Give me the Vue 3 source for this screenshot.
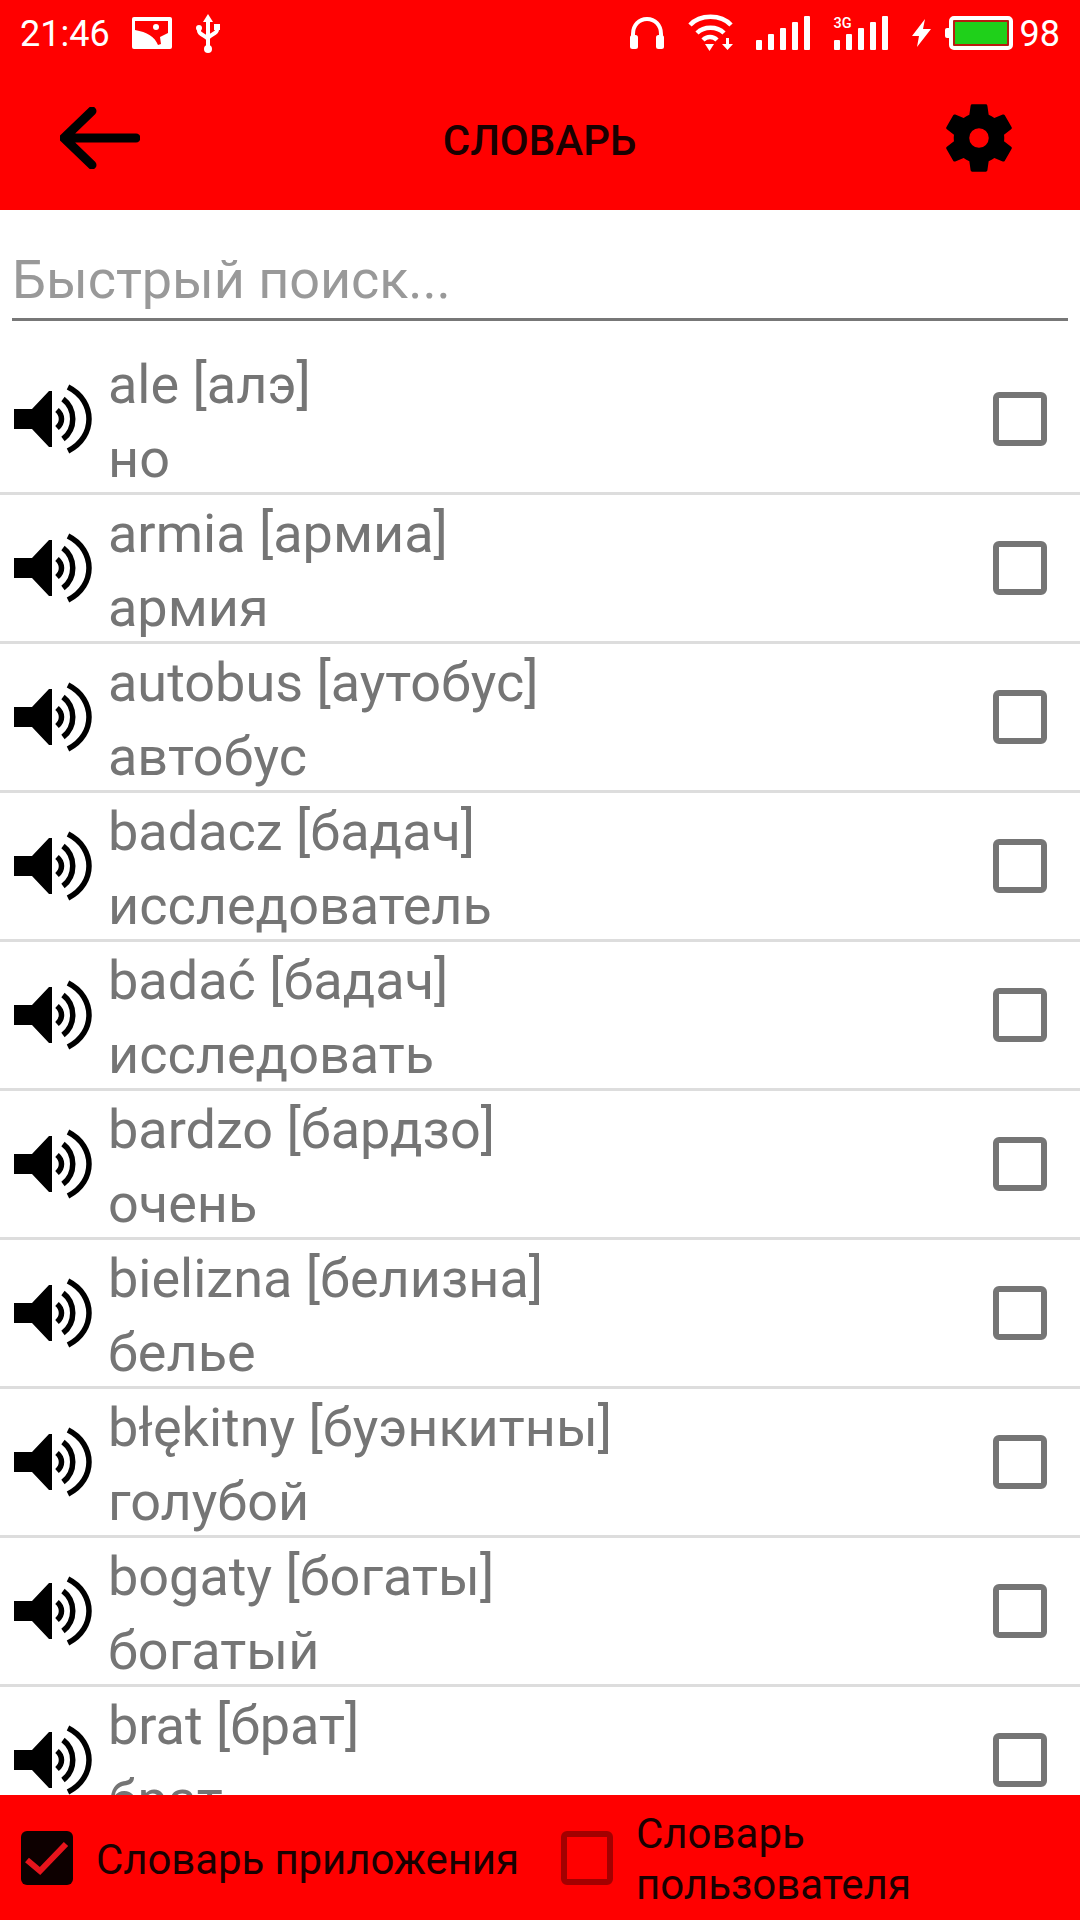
<script setup>
import { ref } from 'vue'

const words = ref([
	{ pl: 'ale [алэ]', ru: 'но' },
	{ pl: 'armia [армиа]', ru: 'армия' },
	{ pl: 'autobus [аутобус]', ru: 'автобус' },
	{ pl: 'badacz [бадач]', ru: 'исследователь' },
	{ pl: 'badać [бадач]', ru: 'исследовать' },
	{ pl: 'bardzo [бардзо]', ru: 'очень' },
	{ pl: 'bielizna [белизна]', ru: 'белье' },
	{ pl: 'błękitny [буэнкитны]', ru: 'голубой' },
	{ pl: 'bogaty [богаты]', ru: 'богатый' },
	{ pl: 'brat [брат]', ru: 'брат' }
]);
</script>

<template>
	<div class="page">
		<div class="status">
			<span class="time">21:46</span>
			<svg class="ic-photo" width="40" height="32" viewBox="0 0 40 32">
				<rect width="40" height="32" rx="2" fill="#fff" />
				<path fill="#f00" d="M3 4h33v12l-8 4 1 7-3 1C23 20 15 15 3 13z" />
				<circle cx="24" cy="10" r="3" fill="#fff" />
			</svg>
			<svg class="ic-usb" width="24" height="39" viewBox="0 0 24 39">
				<path fill="none" stroke="#fff" stroke-width="4" d="M12 5v29M3 15v2c0 4 9 5 9 9M21 15v1c0 4-9 5-9 9" />
				<path fill="#fff" d="M12 0l5 8H7z" />
				<circle cx="3" cy="14" r="3" fill="#fff" />
				<path fill="#fff" d="M18 10h6v6h-6z" />
				<circle cx="12" cy="35" r="4" fill="#fff" />
			</svg>
			<span class="grow"></span>
			<svg class="ic-phones" width="34" height="32" viewBox="0 0 34 32">
				<path fill="none" stroke="#fff" stroke-width="4" d="M3 22V17C3 8 9 2 17 2s14 6 14 15v5" />
				<rect x="0" y="18" width="8" height="14" rx="2.5" fill="#fff" />
				<rect x="26" y="18" width="8" height="14" rx="2.5" fill="#fff" />
			</svg>
			<svg class="ic-wifi" width="46" height="38" viewBox="0 0 46 38">
				<path fill="none" stroke="#fff" stroke-width="4.500" d="M2 11C12 0 33 0 43 11M9 19c7-7 20-7 27 0M15 26c4-4 10-4 14 0" />
				<path fill="#fff" d="M17 30h9l-4.500 7z" />
				<path fill="#fff" d="M38 24h3v6h4l-5.500 6-5.500-6h4z" />
			</svg>
			<svg class="ic-signal" width="54" height="34" viewBox="0 0 54 34">
				<rect x="0" y="24" width="6" height="10" rx="1" fill="#fff" />
				<rect x="12" y="18" width="6" height="16" rx="1" fill="#fff" />
				<rect x="24" y="12" width="6" height="22" rx="1" fill="#fff" />
				<rect x="36" y="6" width="6" height="28" rx="1" fill="#fff" />
				<rect x="48" y="0" width="6" height="34" rx="1" fill="#fff" />
			</svg>
			<div class="sig-3g">
				<span class="tag-3g">3G</span>
				<svg width="54" height="34" viewBox="0 0 54 34">
					<rect x="0" y="24" width="6" height="10" rx="1" fill="#fff" />
					<rect x="12" y="18" width="6" height="16" rx="1" fill="#fff" />
					<rect x="24" y="12" width="6" height="22" rx="1" fill="#fff" />
					<rect x="36" y="6" width="6" height="28" rx="1" fill="#fff" />
					<rect x="48" y="0" width="6" height="34" rx="1" fill="#fff" />
				</svg>
			</div>
			<svg class="ic-bolt" width="19" height="28" viewBox="0 0 19 28">
				<path fill="#fff" d="M13 0L0 17h7L5 28 19 10h-8z" />
			</svg>
			<div class="battery">
				<span class="batt-nub"></span>
				<span class="batt-body"><span class="batt-fill"></span></span>
			</div>
			<span class="level">98</span>
		</div>

		<div class="toolbar">
			<svg class="back" width="80" height="62" viewBox="0 0 80 62">
				<path fill="none" stroke="#000" stroke-width="9" stroke-linecap="round" d="M4 31h72M32 4L4 31l28 27" />
			</svg>
			<div class="title">СЛОВАРЬ</div>
			<svg class="gear" width="66" height="70" viewBox="2.200 2 19.600 20">
				<path fill="#000" d="M19.430 12.980c.04-.32.070-.64.070-.98s-.03-.66-.07-.98l2.110-1.650a.5.500 0 0 0 .12-.64l-2-3.460a.5.500 0 0 0-.61-.22l-2.490 1a7.300 7.300 0 0 0-1.690-.98l-.38-2.650A.49.490 0 0 0 14 2h-4a.49.490 0 0 0-.49.420l-.38 2.650c-.61.250-1.170.590-1.690.98l-2.490-1a.49.490 0 0 0-.61.220l-2 3.460a.49.490 0 0 0 .12.640l2.110 1.650c-.04.320-.07.650-.07.980s.03.660.07.980l-2.110 1.650a.5.500 0 0 0-.12.640l2 3.460c.12.220.39.300.61.220l2.490-1c.52.400 1.080.730 1.690.98l.38 2.650c.03.240.24.420.49.420h4c.25 0 .46-.18.49-.42l.38-2.650c.61-.25 1.170-.59 1.690-.98l2.490 1c.23.090.49 0 .61-.22l2-3.460a.5.500 0 0 0-.12-.64zM12 14.900a2.900 2.900 0 1 1 0-5.800 2.900 2.900 0 0 1 0 5.800z" />
			</svg>
		</div>

		<div class="search">
			<input class="search-input" type="text" placeholder="Быстрый поиск..." />
		</div>

		<ul class="list">
			<li v-for="word in words" :key="word.pl" class="row">
				<svg class="speaker" width="80" height="70" viewBox="0 0 80 70">
					<path fill="#000" d="M0 25h18L35 7h3v56h-3L18 45H0z" />
					<path fill="none" stroke="#000" stroke-width="5.500" d="M43 26c6 5 6 13 0 18M49 15c13 10 13 30 0 40M54 3c28 14 28 50 0 64" />
				</svg>
				<div class="text">
					<p>{{ word.pl }}</p>
					<p>{{ word.ru }}</p>
				</div>
				<span class="box"></span>
			</li>
		</ul>

		<div class="bottom">
			<div class="opt first">
				<span class="check on">
					<svg width="52" height="54" viewBox="0 0 52 54">
						<path fill="none" stroke="#e8141c" stroke-width="6" d="M6 29l13 11L45 13" />
					</svg>
				</span>
				<span class="label">Словарь приложения</span>
			</div>
			<div class="opt">
				<span class="check"></span>
				<span class="label">Словарь<br />пользователя</span>
			</div>
		</div>
	</div>
</template>

<style>
html, body {
	margin: 0;
	background: #fff;
}
</style>

<style scoped>
.page {
	width: 1080px;
	height: 1920px;
	display: flex;
	flex-direction: column;
	overflow: hidden;
	font-family: Roboto, "Noto Sans", sans-serif;
	background: #fff;
}

.status {
	height: 66px;
	flex: none;
	display: flex;
	align-items: center;
	padding: 0 20px;
	box-sizing: border-box;
	background: #ff0000;
	color: #fff;
}

.time {
	font-size: 36px;
	width: 112px;
	padding-top: 2px;
}

.ic-usb {
	margin-left: 24px;
}

.grow {
	flex: 1;
}

.ic-wifi {
	margin-left: 24px;
}

.ic-signal {
	margin-left: 22px;
}

.sig-3g {
	position: relative;
	margin-left: 24px;
	height: 34px;
}

.sig-3g svg {
	display: block;
}

.tag-3g {
	position: absolute;
	left: 0;
	top: 1px;
	font-size: 14.500px;
	font-weight: 500;
	line-height: 13px;
}

.ic-bolt {
	margin-left: 24px;
}

.battery {
	margin-left: 14px;
	display: flex;
	align-items: center;
}

.batt-nub {
	width: 4px;
	height: 10px;
	background: #fff;
	border-radius: 2px 0 0 2px;
}

.batt-body {
	width: 64px;
	height: 34px;
	box-sizing: border-box;
	border: 4px solid #fff;
	border-radius: 5px;
	padding: 2px;
	background: #b81c10;
	display: block;
}

.batt-fill {
	display: block;
	height: 100%;
	background: #1fd01a;
}

.level {
	font-size: 36px;
	margin-left: 7px;
	padding-top: 2px;
}

.toolbar {
	height: 144px;
	flex: none;
	display: flex;
	align-items: center;
	justify-content: space-between;
	padding: 0 68px 0 60px;
	background: #ff0000;
}

.title {
	font-size: 42px;
	font-weight: 500;
	color: #1a0000;
	margin-top: 4px;
	margin-right: 7px;
}

.search {
	flex: none;
	height: 136px;
	padding: 26px 12px 0;
	box-sizing: border-box;
}

.search-input {
	display: block;
	width: 100%;
	height: 85px;
	box-sizing: border-box;
	padding: 5px 0 0;
	border: 0;
	border-bottom: 3px solid #777;
	outline: none;
	background: transparent;
	font: 54px Roboto, sans-serif;
	letter-spacing: -0.100px;
}

.search-input::placeholder {
	color: #999;
	opacity: 1;
}

.list {
	flex: 1;
	min-height: 0;
	overflow: hidden;
	margin: 0;
	padding: 0;
	list-style: none;
}

.row {
	height: 149px;
	box-sizing: border-box;
	border-bottom: 3px solid #ddd;
	display: flex;
	align-items: center;
	padding: 0 33px 0 14px;
}

.speaker {
	flex: none;
}

.text {
	flex: 1;
	margin-left: 14px;
	padding-top: 5px;
	color: #757575;
	font-size: 54px;
	line-height: 74px;
}

.text p {
	margin: 0;
}

.box {
	width: 54px;
	height: 54px;
	box-sizing: border-box;
	border: 6px solid #757575;
	border-radius: 6px;
}

.bottom {
	height: 125px;
	flex: none;
	display: flex;
	align-items: center;
	padding-left: 21px;
	background: #ff0000;
	color: #1a0000;
	font-size: 42px;
	line-height: 51px;
}

.opt {
	display: flex;
	align-items: center;
}

.opt.first {
	width: 540px;
}

.label {
	padding-top: 3px;
}

.first .label {
	letter-spacing: -0.100px;
}

.check {
	flex: none;
	width: 52px;
	height: 54px;
	box-sizing: border-box;
	border: 6px solid #a30000;
	border-radius: 6px;
	margin-right: 23px;
}

.check.on {
	border: 0;
	background: #0d0000;
}

.check svg {
	display: block;
}
</style>
